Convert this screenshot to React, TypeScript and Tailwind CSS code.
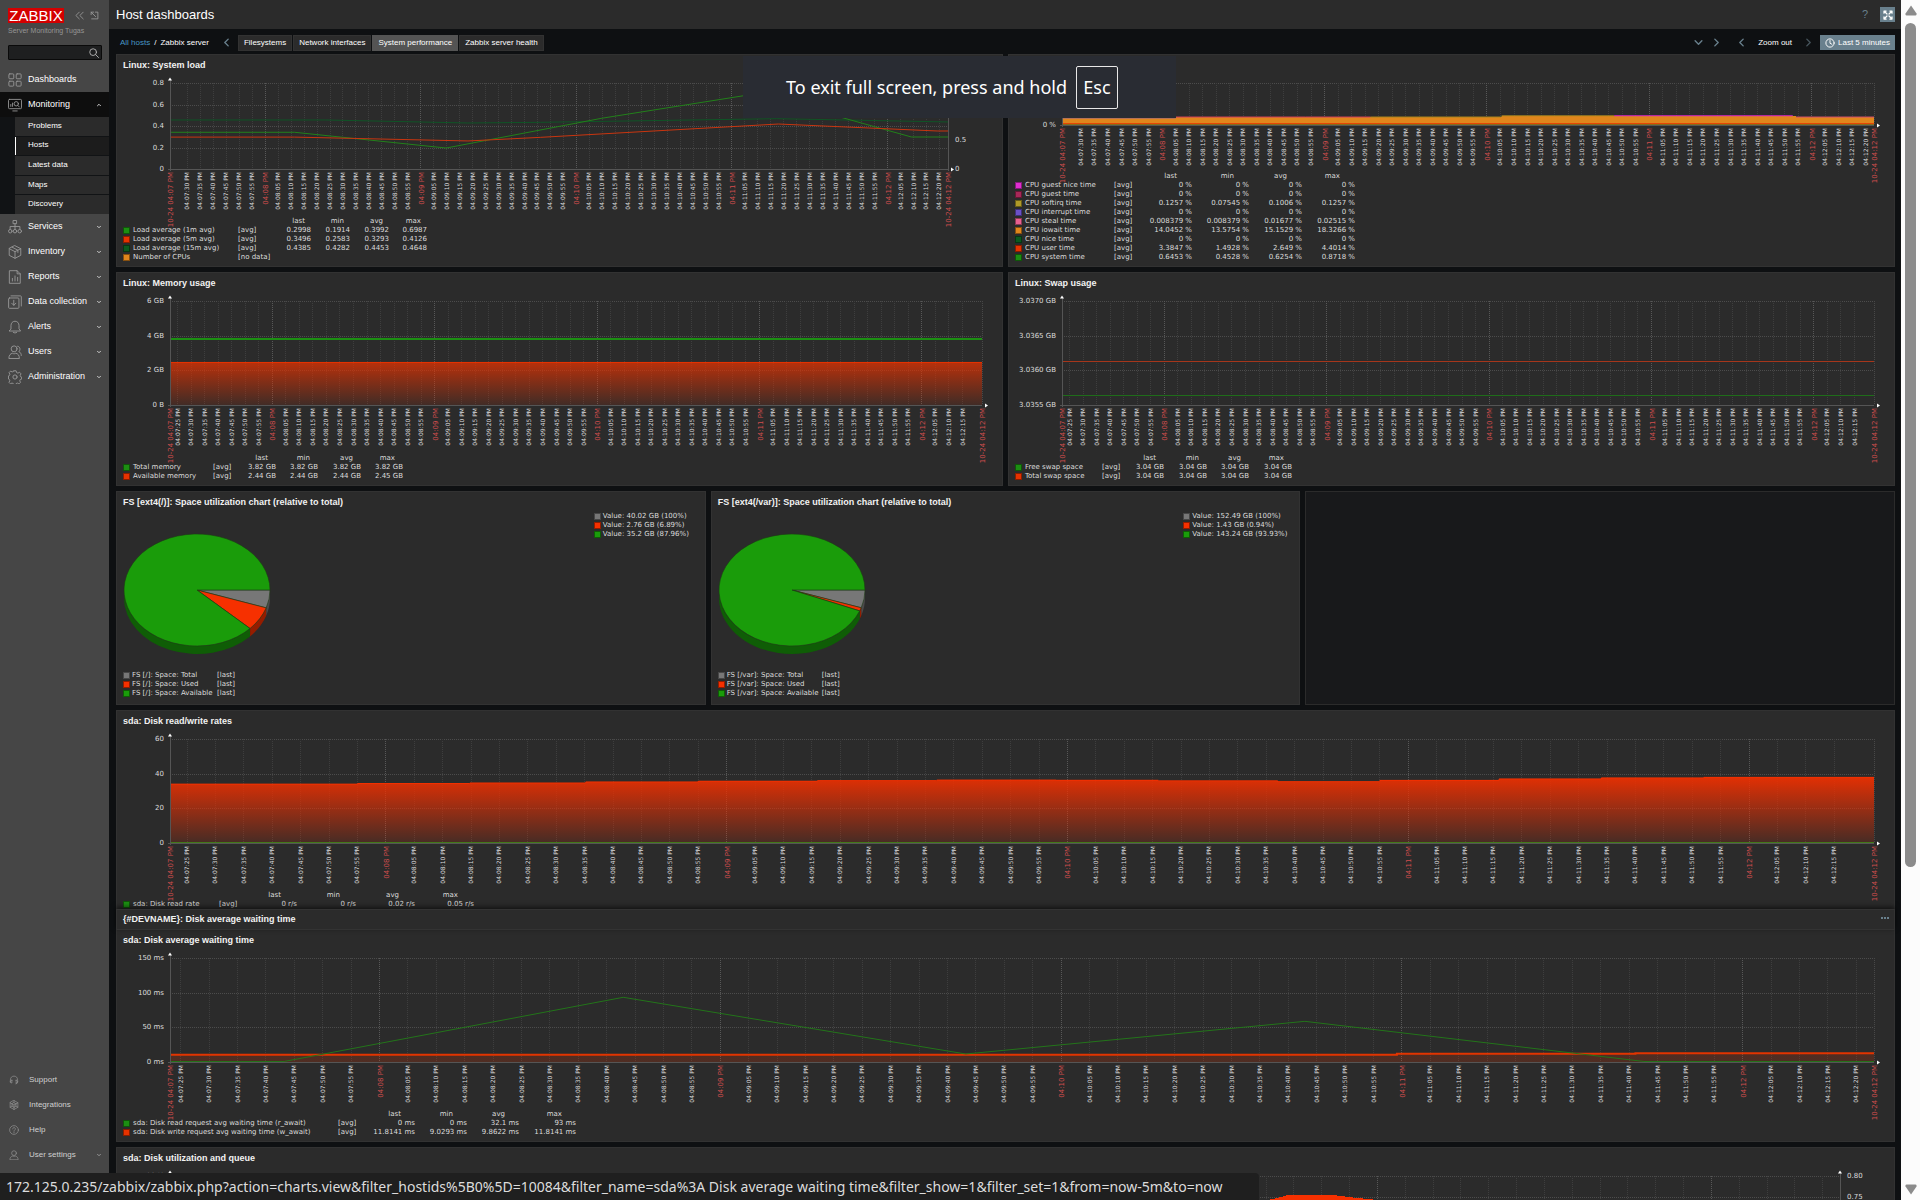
import React, { useId } from "react";

/* ---------- icons ---------- */

const icons: Record<string, React.ReactNode> = {
  dashboards: (
    <>
      <rect x="1" y="1" width="5.6" height="5.6" rx="1" />
      <rect x="9.4" y="1" width="5.6" height="5.6" rx="1" />
      <rect x="1" y="9.4" width="5.6" height="5.6" rx="1" />
      <rect x="9.4" y="9.4" width="5.6" height="5.6" rx="1" />
    </>
  ),
  monitoring: (
    <>
      <rect x="0.6" y="1.6" width="14.8" height="10.6" rx="1" />
      <path d="M5.5 14.8h5M3.2 9.6V7.4M5.2 9.6V5.8" />
      <circle cx="9.4" cy="6.6" r="2.5" />
      <path d="M11.2 8.5l1.8 1.8" />
    </>
  ),
  services: (
    <>
      <rect x="6.2" y="0.6" width="3.6" height="3.6" />
      <path d="M8 4.2v6.2M2.4 10.4V7.4h11.2v3" />
      <circle cx="2.6" cy="12.8" r="2" />
      <circle cx="8" cy="12.8" r="2" />
      <circle cx="13.4" cy="12.8" r="2" />
    </>
  ),
  inventory: (
    <path d="M8 0.8l6.6 3.4v7.6L8 15.2l-6.6-3.4V4.2zM1.4 4.2L8 7.6l6.6-3.4M8 7.6v7.6M4.7 2.5l6.6 3.4v2.6" />
  ),
  reports: (
    <>
      <path d="M2 0.8h8.4L14 4.4v10.8H2zM10.4 0.8v3.6H14" />
      <path d="M5 12.6V9.6M8 12.6V6.8M11 12.6V8.4" />
    </>
  ),
  data: (
    <>
      <rect x="0.7" y="3.4" width="11.8" height="11.8" rx="1" />
      <path d="M3.4 1h10.8q1 0 1 1v10.6" />
      <path d="M6.6 6v5.6M4.2 9.4l2.4 2.4L9 9.4" />
    </>
  ),
  alerts: (
    <path d="M1.6 12.6h12.8l-1.8-2.6V6.4C12.600 3.400 10.600 1.400 8 1.400S3.400 3.400 3.400 6.400V10zM6 14.200q2 1.600 4 0" />
  ),
  users: (
    <>
      <circle cx="7" cy="4.4" r="3.4" />
      <path d="M1 15c0-3.4 1.8-5.200 4.200-5.600 1.200.8 2.400.8 3.600 0 2.400.4 4.200 2.200 4.200 5.600z" />
      <path d="M11 1.400c3.200.4 3.400 4.600 1.400 6.200 1.800.8 2.800 2 2.800 4.400" />
    </>
  ),
  admin: (
    <>
      <circle cx="8" cy="8" r="2.4" />
      <path d="M6.700 0.900h2.600l.5 2 1.500.7 1.900-1 1.700 1.800-1 1.800.6 1.500 1.100.4v2.300l-1.600.5-.6 1.500.9 1.700-1.800 1.800-1.800-1-1.400.6-.6 1.900H6.600l-.5-1.900-1.500-.6-1.800.9-1.700-1.700 1-1.800-.6-1.500-.9-.5V6.700l1-.4.600-1.500-1-1.800 1.700-1.700 1.900.9 1.400-.6z" />
    </>
  ),
  support: (
    <path d="M2.200 11.600V8C2.200 4 4.800 1.800 8 1.800S13.800 4 13.800 8v3.600q0 2.400-3 2.600M4.600 8.400v4.400c-3.400.2-3.400-4.600 0-4.400zM11.400 8.400v4.400c3.400.2 3.400-4.600 0-4.400z" />
  ),
  integrations: (
    <>
      <path d="M8 0.800l6.200 3.600v7.200L8 15.200l-6.200-3.600V4.400z" />
      <path d="M8 4.400l3.200 1.800v3.600L8 11.600 4.800 9.800V6.200zM8 0.800v3.600M8 11.600v3.600M4.800 6.200L1.800 4.400M11.200 6.200l3-1.800M4.800 9.800l-3 1.800M11.200 9.800l3 1.800M4.800 6.200L8 8l3.200-1.800M8 8v3.600" />
    </>
  ),
  help: (
    <>
      <circle cx="8" cy="8" r="7" />
      <path d="M5.800 6.200c.2-3 4.600-2.600 4.400 0C10.200 8 8 7.800 8 9.800M8 11.400v1.200" />
    </>
  ),
  user: (
    <>
      <circle cx="8" cy="5" r="3.800" />
      <path d="M1.400 15c0-2.800 2-4.800 4.400-5.400 1.400.6 3 .6 4.400 0 2.400.6 4.400 2.600 4.400 5.400z" />
    </>
  ),
  search: (
    <>
      <circle cx="6.600" cy="6.600" r="5.400" />
      <path d="M10.600 10.600l4.600 4.600" />
    </>
  ),
  collapse: <path d="M7.600 2L1.600 8l6 6M14.600 2l-6 6 6 6" />,
  hide: <path d="M2 6.500V2h4.500M2 2l8 8M9.500 2H14v12H3" />,
  left: <path d="M11 2L5 8l6 6" />,
  right: <path d="M5 2l6 6-6 6" />,
  down: <path d="M2 5l6 6 6-6" />,
  up: <path d="M2 11l6-6 6 6" />,
  clock: (
    <>
      <circle cx="8" cy="8" r="6.600" />
      <path d="M8 4v4.400l3 1.600" />
    </>
  ),
  shrink: (
    <path d="M2 2l4.400 4.400M14 2L9.600 6.400M2 14l4.400-4.400M14 14L9.600 9.600M1.600 5V1.600H5M11 1.600h3.400V5M1.600 11v3.400H5M11 14.400h3.400V11" />
  ),
};

function Icon({ name, className, weight = 1 }: { name: string; className: string; weight?: number }) {
  return (
    <svg
      viewBox="0 0 16 16"
      className={className}
      fill="none"
      stroke="currentColor"
      strokeWidth={weight}
      strokeLinecap="round"
      strokeLinejoin="round"
      aria-hidden="true"
    >
      {icons[name]}
    </svg>
  );
}

/* ---------- sidebar ---------- */

const subItems = ["Problems", "Hosts", "Latest data", "Maps", "Discovery"];
const mainItems = [
  ["services", "Services"],
  ["inventory", "Inventory"],
  ["reports", "Reports"],
  ["data", "Data collection"],
  ["alerts", "Alerts"],
  ["users", "Users"],
  ["admin", "Administration"],
];
const footItems = [
  ["support", "Support"],
  ["integrations", "Integrations"],
  ["help", "Help"],
  ["user", "User settings"],
];

function MenuLink({ icon, label, arrow, active }: { icon: string; label: string; arrow?: string; active?: boolean }) {
  return (
    <a
      href="#"
      className={
        "flex h-[25px] shrink-0 items-center pl-2 pr-2 text-[9px] text-white " + (active ? "bg-[#0e0e0e]" : "")
      }
    >
      <Icon name={icon} className="mr-[6px] size-[14px] text-[#9a9a9a]" />
      <span className="flex-1 whitespace-nowrap">{label}</span>
      {arrow && <Icon name={arrow} className="size-1 text-[#d0d0d0]" weight={4} />}
    </a>
  );
}

function Sidebar() {
  return (
    <aside className="flex w-[109px] shrink-0 flex-col bg-[#464646]">
      <div className="flex items-center pl-2 pr-[10px] pt-2">
        <a href="#" className="flex h-[15px] w-14 items-center justify-center bg-[#d40000] text-[15px] leading-none text-white">
          ZABBIX
        </a>
        <button aria-label="Collapse sidebar" className="ml-auto text-[#9a9a9a]">
          <Icon name="collapse" className="size-[9px]" weight={1.5} />
        </button>
        <button aria-label="Hide sidebar" className="ml-[6px] text-[#9a9a9a]">
          <Icon name="hide" className="size-[9px]" weight={1.5} />
        </button>
      </div>
      <div className="mt-[3px] pl-2 text-[7px] leading-[10px] whitespace-nowrap text-[#959595]">Server Monitoring Tugas</div>
      <form className="mx-2 mt-[9px] flex h-[15px] w-[94px] items-center rounded-[1px] border border-[#0a0a0a] bg-[#1e1f20] pr-[2px]">
        <input aria-label="Search" className="min-w-0 flex-1 bg-transparent px-1 text-[8px] text-white outline-none" />
        <button type="button" aria-label="Search" className="text-[#b0b0b0]">
          <Icon name="search" className="size-[10px]" weight={1.5} />
        </button>
      </form>
      <nav className="mt-[7px] flex flex-col">
        <MenuLink icon="dashboards" label="Dashboards" />
        <MenuLink icon="monitoring" label="Monitoring" arrow="up" active />
        <ul className="flex h-[97px] flex-col gap-px bg-[#111315] pl-[15px] text-[8px] text-white">
          {subItems.map((s) => (
            <li key={s} className="flex flex-1">
              <a
                href="#"
                className={
                  "flex flex-1 items-center border-l pb-px pl-3 leading-none " +
                  (s === "Hosts" ? "border-white bg-[#1c1c1c]" : "border-[#2b2b2b] bg-[#2b2b2b]")
                }
              >
                {s}
              </a>
            </li>
          ))}
        </ul>
        {mainItems.map(([i, l]) => (
          <MenuLink key={l} icon={i} label={l} arrow="down" />
        ))}
      </nav>
      <nav className="mt-auto mb-[33px] flex flex-col text-[8px] text-[#d0d0d0]">
        {footItems.map(([i, l]) => (
          <a key={l} href="#" className="flex h-[25px] items-center pl-[9px] pr-2">
            <Icon name={i} className="mr-[10px] size-[10px] text-[#9a9a9a]" />
            <span className="flex-1">{l}</span>
            {l === "User settings" && <Icon name="down" className="size-1 text-[#b0b0b0]" weight={3} />}
          </a>
        ))}
      </nav>
    </aside>
  );
}

/* ---------- graph ---------- */

type Pt = [number, number];
type Series = { points: Pt[]; color: string; width?: number; fill?: [number, number]; solid?: boolean; noLine?: boolean };
type GraphProps = {
  height: number;
  start: number;
  from?: number;
  to?: number;
  ticks: string[];
  rightTicks?: [string, number][];
  rightAxis?: boolean;
  margin?: string;
  hideTime?: boolean;
  series: Series[];
};

const pad = (n: number) => String(n).padStart(2, "0");

function Graph({ height, start, from = 25, to = 320, ticks, rightTicks = [], rightAxis, margin = "mr-5", hideTime, series }: GraphProps) {
  const id = useId();
  const marks: number[] = [];
  for (let t = from; t <= to; t += 5) marks.push(t);
  const label = (t: number, pos: string, text: string, big: boolean) => (
    <svg key={text + t} x={pos} y={height + 3} width="1" height="1" overflow="visible">
      <text
        transform="rotate(-90)"
        x="0"
        y={big ? 3 : 2}
        textAnchor="end"
        className={big ? "fill-[#cf4d4d] text-[7px]" : "fill-[#dcdcdc] text-[6px]"}
      >
        {text}
      </text>
    </svg>
  );
  return (
    <div className={"ml-[53px] mt-3 font-['DejaVu_Sans',sans-serif] " + margin}>
      <svg width="100%" height={height} className="block overflow-visible">
        <defs>
          {series.map(
            (s, i) =>
              s.fill && (
                <linearGradient key={i} id={id + i} x1="0" y1="0" x2="0" y2="1">
                  <stop offset="0" stopColor={s.color} stopOpacity={s.fill[0]} />
                  <stop offset="1" stopColor={s.color} stopOpacity={s.fill[1]} />
                </linearGradient>
              ),
          )}
        </defs>
        <g shapeRendering="crispEdges" strokeWidth="1" strokeDasharray="1 1">
          {ticks.map((t, i) => {
            const y = Math.round((height * i) / (ticks.length - 1)) + 0.5;
            return i < ticks.length - 1 && <line key={t} x1="0" x2="100%" y1={y} y2={y} className="stroke-[#4c4c4c]" />;
          })}
          {marks.map((t) => {
            const x = ((t - start) / 300) * 100 + "%";
            return <line key={t} x1={x} x2={x} y1="0" y2={height} className={t % 60 ? "stroke-[#3e3e3e]" : "stroke-[#585858]"} />;
          })}
          <line x1="100%" x2="100%" y1="0" y2={height} className="stroke-[#484848]" />
        </g>
        <svg width="100%" height={height} viewBox="0 0 100 100" preserveAspectRatio="none" overflow="visible">
          {series.map((s, i) => {
            const line = s.points.map((p) => p.join(",")).join(" ");
            const last = s.points[s.points.length - 1][0];
            return (
              <g key={i}>
                {s.fill && (
                  <polygon points={`${s.points[0][0]},100 ${line} ${last},100`} fill={s.solid ? s.color : `url(#${id + i})`} shapeRendering="crispEdges" />
                )}
                {!s.noLine && (
                  <polyline points={line} fill="none" stroke={s.color} strokeWidth={s.width ?? 1} vectorEffect="non-scaling-stroke" />
                )}
              </g>
            );
          })}
        </svg>
        <g shapeRendering="crispEdges" className="stroke-[#555]">
          <line x1="0" x2="0" y1="-3" y2={height + 2} />
          <line x1="-2" x2="100%" y1={height + 0.5} y2={height + 0.5} />
          {rightAxis && <line x1="100%" x2="100%" y1="-3" y2={height + 2} />}
        </g>
        <path d="M-2 -2.500h4l-2 -3z" className="fill-white" />
        {rightAxis && (
          <svg x="100%" width="1" height="1" overflow="visible">
            <path d="M-2 -2.500h4l-2 -3z" className="fill-white" />
          </svg>
        )}
        <svg x="100%" y={height} width="1" height="1" overflow="visible">
          <path d="M3 -1.500v4l3 -2z" className="fill-white" />
        </svg>
        {ticks.map((t, i) => (
          <text key={t} x="-6" y={Math.round((height * i) / (ticks.length - 1)) + 2} textAnchor="end" className="fill-[#dcdcdc] text-[7px]">
            {t}
          </text>
        ))}
        {rightTicks.map(([t, y]) => (
          <svg key={t} x="100%" y={y} width="1" height="1" overflow="visible">
            <text x="7" y="2" className="fill-[#dcdcdc] text-[7px]">
              {t}
            </text>
          </svg>
        ))}
        {!hideTime && (
          <g>
            {marks.map((t) => {
              const m = pad(7 + Math.floor(t / 60));
              const x = ((t - start) / 300) * 100 + "%";
              return t % 60 ? label(t, x, `04:${m}:${pad(t % 60)} PM`, false) : label(t, x, `04:${m} PM`, true);
            })}
            {label(-1, "0%", "10-24 04:07 PM", true)}
            {label(-2, "100%", "10-24 04:12 PM", true)}
          </g>
        )}
      </svg>
    </div>
  );
}

/* ---------- widgets ---------- */

function Widget({ title, size, span, children }: { title: string; size: string; span: string; children: React.ReactNode }) {
  return (
    <section className={"relative flex min-w-0 flex-col border border-[#323232] bg-[#2b2b2b] " + size + " " + span}>
      <h2 className="px-[6px] pt-1 text-[9px] leading-3 font-bold whitespace-nowrap text-[#f2f2f2]">
        <a href="#">{title}</a>
      </h2>
      {children}
    </section>
  );
}

type Row = [string, string, string, string[]?];

function Legend({ rows, cols, head, bottom = "mb-1" }: { rows: Row[]; cols: string[]; head: string; bottom?: string }) {
  return (
    <table
      className={
        "mt-auto ml-[6px] w-max self-start font-['DejaVu_Sans',sans-serif] text-[7px] leading-[9px] whitespace-nowrap text-[#dcdcdc] " + bottom
      }
    >
      <colgroup>
        <col className="w-[10px]" />
        {cols.map((c, i) => (
          <col key={i} className={c} />
        ))}
      </colgroup>
      <thead>
        <tr>
          <td colSpan={3} />
          {["last", "min", "avg", "max"].map((h) => (
            <th key={h} scope="col" className={"text-right font-normal " + head}>
              {h}
            </th>
          ))}
        </tr>
      </thead>
      <tbody>
        {rows.map(([color, name, fn, values]) => (
          <tr key={name}>
            <td>
              <span className={"block size-[7px] border border-black/40 " + color} />
            </td>
            <td>{name}</td>
            <td colSpan={values ? 1 : 3}>{fn}</td>
            {values?.map((v, i) => (
              <td key={i} className="text-right">
                {v}
              </td>
            ))}
          </tr>
        ))}
      </tbody>
    </table>
  );
}

const RX = 73;
const RY = 56;
const DEPTH = 8;
const at = (deg: number): Pt => [RX + RX * Math.cos((deg * Math.PI) / 180), RY + RY * Math.sin((deg * Math.PI) / 180)];

function Pie({ stops }: { stops: number[] }) {
  const colors = [
    ["#777777", "#4a4a4a"],
    ["#f63000", "#941d00"],
    ["#1a9c0a", "#0f5d06"],
  ];
  const edges = [0, ...stops, 360];
  return (
    <svg width="148" height="122" viewBox="-1 -1 148 122" className="block" stroke="#1c3a14" strokeWidth="0.6">
      {colors.map(([, dark], i) => {
        const a = at(edges[i]);
        const b = at(Math.min(edges[i + 1], 180));
        return (
          <path
            key={i}
            fill={dark}
            stroke="none"
            d={`M${a[0]} ${a[1]}A${RX} ${RY} 0 0 1 ${b[0]} ${b[1]}v${DEPTH}A${RX} ${RY} 0 0 0 ${a[0]} ${a[1] + DEPTH}z`}
          />
        );
      })}
      {colors.map(([fill], i) => {
        const a = at(edges[i]);
        const b = at(edges[i + 1]);
        const large = edges[i + 1] - edges[i] > 180 ? 1 : 0;
        return <path key={i} fill={fill} d={`M${RX} ${RY}L${a[0]} ${a[1]}A${RX} ${RY} 0 ${large} 1 ${b[0]} ${b[1]}z`} />;
      })}
    </svg>
  );
}

const pieColors = ["bg-[#777777]", "bg-[#f63000]", "bg-[#1a9c0a]"];

function PieWidget({ title, mount, values, stops, valueWidth, nameWidth }: {
  title: string;
  mount: string;
  values: string[];
  stops: number[];
  valueWidth: string;
  nameWidth: string;
}) {
  return (
    <Widget title={title} size="h-[214px]" span="col-span-2">
      <div className="mt-[3px] flex flex-1 flex-col pl-[6px] pb-[6px] font-['DejaVu_Sans',sans-serif] text-[7px] leading-[9px] whitespace-nowrap text-[#dcdcdc]">
        <div className="flex items-start justify-between">
          <div className="pt-[22px]">
            <Pie stops={stops} />
          </div>
          <ul className={"pt-px " + valueWidth}>
            {values.map((v, i) => (
              <li key={v} className="flex items-center gap-[2px]">
                <span className={"size-[7px] border border-black/40 " + pieColors[i]} />
                Value: {v}
              </li>
            ))}
          </ul>
        </div>
        <table className="mt-auto w-max self-start">
          <tbody>
            {["Total", "Used", "Available"].map((n, i) => (
              <tr key={n}>
                <td className="w-[9px]">
                  <span className={"block size-[7px] border border-black/40 " + pieColors[i]} />
                </td>
                <td className={nameWidth}>
                  FS [{mount}]: Space: {n}
                </td>
                <td>[last]</td>
              </tr>
            ))}
          </tbody>
        </table>
      </div>
    </Widget>
  );
}

/* Turns level changes into a stepped outline. */
const steps = (s: Pt[]): Pt[] => s.flatMap(([x, y], i): Pt[] => [[x, y], [i + 1 < s.length ? s[i + 1][0] : 100, y]]);

const flat = (y: number): Pt[] => [[0, y], [100, y]];

const iowait: Pt[] = steps([[0, 82], [13.9, 80], [54.2, 78], [90.4, 80]]);
const readRate: Pt[] = steps([
  [0, 43.4], [11, 42.8], [17.6, 42.3], [24.4, 41.3], [31, 40.6], [38, 40], [45, 39.5], [52, 39.7], [58, 40.2], [65, 41],
  [71, 39.8], [78, 38.4], [84, 37.4], [90, 36.9],
]);

function Dashboard() {
  return (
    <div className="grid grid-cols-6 gap-x-[5px] gap-y-[5px] pr-[6px] pl-[7px]">
      <Widget title="Linux: System load" size="h-[213px]" span="col-span-3">
        <Graph
          height={86}
          start={23.3}
          from={30}
          margin="mr-[54px]"
          ticks={["0.8", "0.6", "0.4", "0.2", "0"]}
          rightTicks={[["0.5", 57], ["0", 86]]}
          rightAxis
          series={[
            { color: "#0f5426", points: [[0, 43], [20, 43], [38.3, 46.5], [47.6, 45.7], [78, 41.5], [100, 45.3]] },
            { color: "#22801a", points: [[0, 57.3], [16, 57.3], [35.5, 75.6], [55.5, 41], [75.4, 12.4], [95.3, 62.8], [100, 62.8]] },
            { color: "#c9350f", points: [[0, 62.9], [16, 62.9], [38.3, 67.4], [47.6, 63.2], [78.2, 47.7], [98.6, 55.8], [100, 55.8]] },
          ]}
        />
        <Legend
          head="pr-[6px]"
          cols={["w-[105px]", "w-[40px]", "w-[33px]", "w-[39px]", "w-[39px]", "w-[38px]"]}
          rows={[
            ["bg-[#1c8f12]", "Load average (1m avg)", "[avg]", ["0.2998", "0.1914", "0.3992", "0.6987"]],
            ["bg-[#e63200]", "Load average (5m avg)", "[avg]", ["0.3496", "0.2583", "0.3293", "0.4126"]],
            ["bg-[#0c5a20]", "Load average (15m avg)", "[avg]", ["0.4385", "0.4282", "0.4453", "0.4648"]],
            ["bg-[#e0861c]", "Number of CPUs", "[no data]"],
          ]}
        />
      </Widget>

      <Widget title="Linux: CPU usage" size="h-[213px]" span="col-span-3">
        <Graph
          height={42}
          start={23}
          from={30}
          ticks={["100 %", "0 %"]}
          series={[
            { color: "#e0861c", points: iowait, fill: [1, 1], solid: true, noLine: true },
            { color: "#6a4fc0", points: [[0, 83], [14, 83]] },
            { color: "#d0405c", points: [[14, 81], [30, 81], [38, 81]] },
            { color: "#a8861f", points: [[38, 81], [54, 81], [54.2, 78], [68, 78]] },
            { color: "#e028c8", points: [[68, 78], [90, 78]] },
            { color: "#d0506c", points: [[90.4, 81], [100, 81]] },
            { color: "#e63200", points: flat(97), width: 1 },
            { color: "#2c6a1e", points: flat(100), width: 1 },
          ]}
        />
        <Legend
          head="pr-[15px]"
          cols={["w-[89px]", "w-[30px]", "w-[48px]", "w-[57px]", "w-[53px]", "w-[53px]"]}
          rows={[
            ["bg-[#e02ed0]", "CPU guest nice time", "[avg]", ["0 %", "0 %", "0 %", "0 %"]],
            ["bg-[#a82858]", "CPU guest time", "[avg]", ["0 %", "0 %", "0 %", "0 %"]],
            ["bg-[#b09a28]", "CPU softirq time", "[avg]", ["0.1257 %", "0.07545 %", "0.1006 %", "0.1257 %"]],
            ["bg-[#6a50c8]", "CPU interrupt time", "[avg]", ["0 %", "0 %", "0 %", "0 %"]],
            ["bg-[#e86090]", "CPU steal time", "[avg]", ["0.008379 %", "0.008379 %", "0.01677 %", "0.02515 %"]],
            ["bg-[#e0861c]", "CPU iowait time", "[avg]", ["14.0452 %", "13.5754 %", "15.1529 %", "18.3266 %"]],
            ["bg-[#0c5a20]", "CPU nice time", "[avg]", ["0 %", "0 %", "0 %", "0 %"]],
            ["bg-[#e63200]", "CPU user time", "[avg]", ["3.3847 %", "1.4928 %", "2.649 %", "4.4014 %"]],
            ["bg-[#1c8f12]", "CPU system time", "[avg]", ["0.6453 %", "0.4528 %", "0.6254 %", "0.8718 %"]],
          ]}
        />
      </Widget>

      <Widget title="Linux: Memory usage" size="h-[214px]" span="col-span-3">
        <Graph
          height={104}
          start={22.2}
          to={315}
          ticks={["6 GB", "4 GB", "2 GB", "0 B"]}
          series={[
            { color: "#e63200", points: flat(59.1), fill: [0.75, 0.12], width: 1 },
            { color: "#1c8f12", points: flat(36.54), width: 2 },
          ]}
        />
        <Legend
          head="pr-2"
          cols={["w-[80px]", "w-[30px]", "w-[33px]", "w-[42px]", "w-[43px]", "w-[42px]"]}
          rows={[
            ["bg-[#1c8f12]", "Total memory", "[avg]", ["3.82 GB", "3.82 GB", "3.82 GB", "3.82 GB"]],
            ["bg-[#e63200]", "Available memory", "[avg]", ["2.44 GB", "2.44 GB", "2.44 GB", "2.45 GB"]],
          ]}
        />
      </Widget>

      <Widget title="Linux: Swap usage" size="h-[214px]" span="col-span-3">
        <Graph
          height={104}
          start={22.2}
          to={315}
          ticks={["3.0370 GB", "3.0365 GB", "3.0360 GB", "3.0355 GB"]}
          series={[
            { color: "#a8371c", points: flat(58.17) },
            { color: "#1f6f1a", points: flat(90.9) },
          ]}
        />
        <Legend
          head="pr-2"
          cols={["w-[77px]", "w-[30px]", "w-[32px]", "w-[43px]", "w-[42px]", "w-[43px]"]}
          rows={[
            ["bg-[#1c8f12]", "Free swap space", "[avg]", ["3.04 GB", "3.04 GB", "3.04 GB", "3.04 GB"]],
            ["bg-[#e63200]", "Total swap space", "[avg]", ["3.04 GB", "3.04 GB", "3.04 GB", "3.04 GB"]],
          ]}
        />
      </Widget>

      <PieWidget
        title="FS [ext4(/)]: Space utilization chart (relative to total)"
        mount="/"
        values={["40.02 GB (100%)", "2.76 GB (6.89%)", "35.2 GB (87.96%)"]}
        stops={[18.6, 43.4]}
        valueWidth="w-[111px]"
        nameWidth="w-[85px]"
      />
      <PieWidget
        title="FS [ext4(/var)]: Space utilization chart (relative to total)"
        mount="/var"
        values={["152.49 GB (100%)", "1.43 GB (0.94%)", "143.24 GB (93.93%)"]}
        stops={[18.5, 21.9]}
        valueWidth="w-[116px]"
        nameWidth="w-[95px]"
      />
      <div className="col-span-2 h-[214px] border border-[#2b2b2b] bg-[#18191b]" />

      <Widget title="sda: Disk read/write rates" size="h-[214px]" span="col-span-6">
        <Graph
          height={104}
          start={22}
          to={315}
          ticks={["60", "40", "20", "0"]}
          series={[
            { color: "#f23000", points: readRate, fill: [0.92, 0.14] },
            { color: "#43811a", points: flat(99.6) },
          ]}
        />
        <Legend
          head="pr-4"
          bottom="mb-[14px]"
          cols={["w-[86px]", "w-[30px]", "w-[48px]", "w-[59px]", "w-[59px]", "w-[59px]"]}
          rows={[["bg-[#1c8f12]", "sda: Disk read rate", "[avg]", ["0 r/s", "0 r/s", "0.02 r/s", "0.05 r/s"]]]}
        />
      </Widget>

      <Widget title="sda: Disk average waiting time" size="h-[213px]" span="col-span-6">
        <div className="absolute inset-x-[-1px] top-[-21px] flex h-[21px] items-center justify-between border border-[#333] bg-[#2b2b2b] pr-[5px] pl-[6px] text-[9px] font-bold text-[#f2f2f2] shadow-[0_-2px_5px_rgba(0,0,0,0.6)]">
          <h2>{"{#DEVNAME}: Disk average waiting time"}</h2>
          <button aria-label="Widget actions" className="mb-1 flex gap-px">
            <span className="size-[2px] bg-[#69808d]" />
            <span className="size-[2px] bg-[#69808d]" />
            <span className="size-[2px] bg-[#69808d]" />
          </button>
        </div>
        <Graph
          height={104}
          start={23.1}
          ticks={["150 ms", "100 ms", "50 ms", "0 ms"]}
          series={[
            { color: "#e23400", points: steps([[0, 93], [56, 93], [72, 92], [86, 91.5]]), fill: [0.2, 0.2], width: 2 },
            { color: "#23741a", points: [[0, 99.5], [6.7, 99.5], [26.6, 37.8], [46.7, 92.3], [66.6, 60.9], [86.5, 99.5], [100, 99.5]] },
          ]}
        />
        <Legend
          head="pr-[14px]"
          cols={["w-[205px]", "w-[30px]", "w-[47px]", "w-[52px]", "w-[52px]", "w-[57px]"]}
          rows={[
            ["bg-[#1c8f12]", "sda: Disk read request avg waiting time (r_await)", "[avg]", ["0 ms", "0 ms", "32.1 ms", "93 ms"]],
            ["bg-[#e63200]", "sda: Disk write request avg waiting time (w_await)", "[avg]", ["11.8141 ms", "9.0293 ms", "9.8622 ms", "11.8141 ms"]],
          ]}
        />
      </Widget>

      <Widget title="sda: Disk utilization and queue" size="h-[214px]" span="col-span-6">
        <Graph
          height={104}
          start={23.1}
          margin="mr-[54px]"
          ticks={["80 %", "60 %", "40 %", "20 %", "10 %", "0 %"]}
          rightTicks={[["0.80", 0], ["0.75", 21]]}
          rightAxis
          hideTime
          series={[
            { color: "#f63000", points: [[65.5, 24], [66.6, 20], [67, 18], [69.5, 18], [71, 21], [73, 24]], fill: [1, 1], solid: true, noLine: true },
          ]}
        />
      </Widget>
    </div>
  );
}

/* ---------- page ---------- */

const tabs = ["Filesystems", "Network interfaces", "System performance", "Zabbix server health"];

export default function App() {
  return (
    <div className="relative flex h-screen overflow-hidden bg-[#0e1012] font-['Liberation_Sans',Arial,sans-serif] text-white">
      <Sidebar />
      <main className="min-w-0 flex-1 overflow-hidden">
        <header className="flex h-[29px] items-center justify-between bg-[#2b2b2b] pr-[6px] pl-[7px]">
          <h1 className="text-[13px] leading-none">Host dashboards</h1>
          <div className="flex items-center gap-3">
            <a href="#" className="text-[11px] leading-none text-[#69808d]">
              ?
            </a>
            <button aria-label="Normal view" className="flex size-[15px] items-center justify-center bg-[#69808d]">
              <Icon name="shrink" className="size-[10px] text-white" weight={2} />
            </button>
          </div>
        </header>
        <div className="flex h-[25px] items-center pt-[2px] pr-[6px] pl-[11px] text-[8px] leading-none whitespace-nowrap">
          <nav className="flex items-center gap-1">
            <a href="#" className="text-[#4796c4]">
              All hosts
            </a>
            <span>/</span>
            <a href="#">Zabbix server</a>
          </nav>
          <button aria-label="Previous tab" className="mr-[7px] ml-[13px] text-[#69808d]">
            <Icon name="left" className="size-[9px]" weight={2.5} />
          </button>
          <div className="flex gap-px">
            {tabs.map((t) => (
              <button
                key={t}
                className={"h-4 border px-[5px] " + (t === "System performance" ? "border-[#545454] bg-[#545454]" : "border-[#323232] bg-[#2b2b2b]")}
              >
                {t}
              </button>
            ))}
          </div>
          <div className="ml-auto flex items-center text-[#69808d]">
            <button aria-label="Tab list">
              <Icon name="down" className="size-[9px]" weight={2.5} />
            </button>
            <button aria-label="Next tab" className="ml-[9px]">
              <Icon name="right" className="size-[9px]" weight={2.5} />
            </button>
            <button aria-label="Earlier" className="ml-4">
              <Icon name="left" className="size-[9px]" weight={2.5} />
            </button>
            <button className="mr-3 ml-[12px] text-white">Zoom out</button>
            <button aria-label="Later" className="mr-[7px] text-[#46545c]">
              <Icon name="right" className="size-[9px]" weight={2.5} />
            </button>
            <button className="flex h-[15px] w-[75px] items-center gap-[3px] bg-[#69808d] pl-[5px] text-white">
              <Icon name="clock" className="size-[10px]" weight={1.5} />
              Last 5 minutes
            </button>
          </div>
        </div>
        <Dashboard />
      </main>
      <div className="flex w-[19px] shrink-0 flex-col items-center bg-[#fcfcfc] py-[5px]" aria-hidden="true">
        <svg width="12" height="11" viewBox="0 0 12 11" className="fill-[#8b8b8b]">
          <path d="M6 0.500L11.500 8.500q.5 2-1 2h-9q-1.500 0-1-2z" />
        </svg>
        <div className="mt-[7px] h-[844px] w-[11px] rounded-full bg-[#8b8b8b]" />
        <svg width="12" height="11" viewBox="0 0 12 11" className="mt-auto fill-[#8b8b8b]">
          <path d="M6 10.500L0.500 2.500q-.5-2 1-2h9q1.500 0 1 2z" />
        </svg>
      </div>

      <div className="absolute top-14 left-[743px] flex h-[62px] w-[433px] items-center justify-end gap-[9px] bg-[#292c33] pr-[58px] font-['Noto_Sans',sans-serif] text-[18px] whitespace-nowrap">
        <span>To exit full screen, press and hold</span>
        <kbd className="flex h-[43px] w-[42px] items-center justify-center rounded-[2px] border border-[#e8e8e8] font-['Noto_Sans',sans-serif]">Esc</kbd>
      </div>
      <div className="absolute bottom-0 left-0 flex h-[27px] items-center rounded-tr-[4px] bg-[#1f1f1f] pr-9 pl-[6px] font-['Noto_Sans',sans-serif] text-[14px] whitespace-nowrap text-[#dcdcdc]">
        172.125.0.235/zabbix/zabbix.php?action=charts.view&amp;filter_hostids%5B0%5D=10084&amp;filter_name=sda%3A Disk average waiting time&amp;filter_show=1&amp;filter_set=1&amp;from=now-5m&amp;to=now
      </div>
    </div>
  );
}
